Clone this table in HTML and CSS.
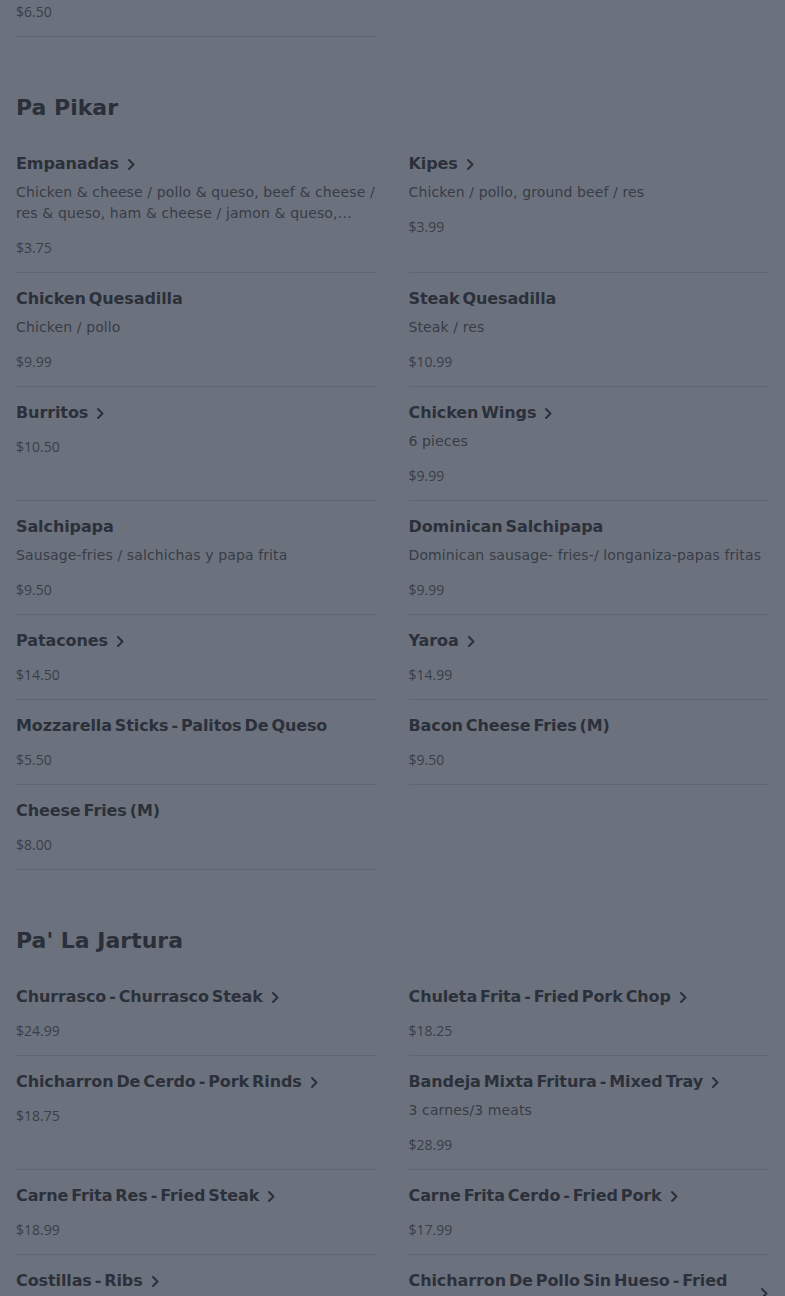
FILE: index.html
```html
<!DOCTYPE html>
<html lang="en">
<head>
	<meta charset="UTF-8">
	<title>Menu</title>
	<link rel="stylesheet" href="styles.css">
</head>
<body>
	<main class="menu">
		<section class="section section-tail">
			<div class="items">
				<div class="item">
					<div class="price">$6.50</div>
				</div>
			</div>
		</section>

		<section class="section">
			<h2>Pa Pikar</h2>
			<div class="items">
				<div class="item">
					<div class="name"><span>Empanadas</span><svg class="chev" viewBox="0 0 8 12"><path d="M2 1.5L6.5 6L2 10.5"/></svg></div>
					<p class="desc">Chicken &amp; cheese / pollo &amp; queso, beef &amp; cheese / res &amp; queso, ham &amp; cheese / jamon &amp; queso, pizza / pizza, shrimp / camarones</p>
					<div class="price">$3.75</div>
				</div>
				<div class="item">
					<div class="name"><span>Kipes</span><svg class="chev" viewBox="0 0 8 12"><path d="M2 1.5L6.5 6L2 10.5"/></svg></div>
					<p class="desc">Chicken / pollo, ground beef / res</p>
					<div class="price">$3.99</div>
				</div>
				<div class="item">
					<div class="name"><span>Chicken Quesadilla</span></div>
					<p class="desc">Chicken / pollo</p>
					<div class="price">$9.99</div>
				</div>
				<div class="item">
					<div class="name"><span>Steak Quesadilla</span></div>
					<p class="desc">Steak / res</p>
					<div class="price">$10.99</div>
				</div>
				<div class="item">
					<div class="name"><span>Burritos</span><svg class="chev" viewBox="0 0 8 12"><path d="M2 1.5L6.5 6L2 10.5"/></svg></div>
					<div class="price">$10.50</div>
				</div>
				<div class="item">
					<div class="name"><span>Chicken Wings</span><svg class="chev" viewBox="0 0 8 12"><path d="M2 1.5L6.5 6L2 10.5"/></svg></div>
					<p class="desc">6 pieces</p>
					<div class="price">$9.99</div>
				</div>
				<div class="item">
					<div class="name"><span>Salchipapa</span></div>
					<p class="desc">Sausage-fries / salchichas y papa frita</p>
					<div class="price">$9.50</div>
				</div>
				<div class="item">
					<div class="name"><span>Dominican Salchipapa</span></div>
					<p class="desc">Dominican sausage- fries-/ longaniza-papas fritas</p>
					<div class="price">$9.99</div>
				</div>
				<div class="item">
					<div class="name"><span>Patacones</span><svg class="chev" viewBox="0 0 8 12"><path d="M2 1.5L6.5 6L2 10.5"/></svg></div>
					<div class="price">$14.50</div>
				</div>
				<div class="item">
					<div class="name"><span>Yaroa</span><svg class="chev" viewBox="0 0 8 12"><path d="M2 1.5L6.5 6L2 10.5"/></svg></div>
					<div class="price">$14.99</div>
				</div>
				<div class="item">
					<div class="name"><span>Mozzarella Sticks - Palitos De Queso</span></div>
					<div class="price">$5.50</div>
				</div>
				<div class="item">
					<div class="name"><span>Bacon Cheese Fries (M)</span></div>
					<div class="price">$9.50</div>
				</div>
				<div class="item">
					<div class="name"><span>Cheese Fries (M)</span></div>
					<div class="price">$8.00</div>
				</div>
			</div>
		</section>

		<section class="section">
			<h2>Pa' La Jartura</h2>
			<div class="items">
				<div class="item">
					<div class="name"><span>Churrasco - Churrasco Steak</span><svg class="chev" viewBox="0 0 8 12"><path d="M2 1.5L6.5 6L2 10.5"/></svg></div>
					<div class="price">$24.99</div>
				</div>
				<div class="item">
					<div class="name"><span>Chuleta Frita - Fried Pork Chop</span><svg class="chev" viewBox="0 0 8 12"><path d="M2 1.5L6.5 6L2 10.5"/></svg></div>
					<div class="price">$18.25</div>
				</div>
				<div class="item">
					<div class="name"><span>Chicharron De Cerdo - Pork Rinds</span><svg class="chev" viewBox="0 0 8 12"><path d="M2 1.5L6.5 6L2 10.5"/></svg></div>
					<div class="price">$18.75</div>
				</div>
				<div class="item">
					<div class="name"><span>Bandeja Mixta Fritura - Mixed Tray</span><svg class="chev" viewBox="0 0 8 12"><path d="M2 1.5L6.5 6L2 10.5"/></svg></div>
					<p class="desc">3 carnes/3 meats</p>
					<div class="price">$28.99</div>
				</div>
				<div class="item">
					<div class="name"><span>Carne Frita Res - Fried Steak</span><svg class="chev" viewBox="0 0 8 12"><path d="M2 1.5L6.5 6L2 10.5"/></svg></div>
					<div class="price">$18.99</div>
				</div>
				<div class="item">
					<div class="name"><span>Carne Frita Cerdo - Fried Pork</span><svg class="chev" viewBox="0 0 8 12"><path d="M2 1.5L6.5 6L2 10.5"/></svg></div>
					<div class="price">$17.99</div>
				</div>
				<div class="item">
					<div class="name"><span>Costillas - Ribs</span><svg class="chev" viewBox="0 0 8 12"><path d="M2 1.5L6.5 6L2 10.5"/></svg></div>
					<div class="price">$19.99</div>
				</div>
				<div class="item">
					<div class="name"><span>Chicharron De Pollo Sin Hueso - Fried Chicken with Fries</span><svg class="chev" viewBox="0 0 8 12"><path d="M2 1.5L6.5 6L2 10.5"/></svg></div>
					<div class="price">$17.99</div>
				</div>
			</div>
		</section>
	</main>
</body>
</html>
```

FILE: styles.css
```css
body{
	margin: 0;
	background: #6c727d;
	font-family: "DejaVu Sans", "Open Sans", sans-serif;
	color: #2b303a;
}
.menu{
	padding: 0 17px 40px 16px;
}
.section{
	margin-top: 52px;
}
.section-tail{
	margin-top: -12px;
}
.section h2{
	margin: 0 0 11px;
	font-size: 22px;
	line-height: 38px;
	font-weight: 700;
	color: #2a2f39;
}
.items{
	display: grid;
	grid-template-columns: 1fr 1fr;
	column-gap: 33px;
}
.item{
	padding: 14px 0 14px;
	border-bottom: 1px solid #60656f;
}
.name{
	display: flex;
	align-items: center;
	gap: 8px;
	font-size: 16px;
	line-height: 24px;
	font-weight: 700;
	letter-spacing: -0.1px;
	word-spacing: -2.5px;
	color: #2b303a;
}
.chev{
	flex: none;
	width: 8px;
	height: 13px;
	fill: none;
	stroke: #2b303a;
	stroke-width: 2;
	stroke-linecap: round;
	stroke-linejoin: round;
}
.desc{
	margin: 6px 0 14px;
	font-size: 14px;
	line-height: 21px;
	letter-spacing: 0.12px;
	color: #373c46;
	display: -webkit-box;
	-webkit-line-clamp: 2;
	-webkit-box-orient: vertical;
	overflow: hidden;
}
.price{
	margin-top: 12px;
	font-family: "Open Sans", sans-serif;
	font-size: 14px;
	line-height: 20px;
	color: #393e48;
}
.section-tail .price{
	margin-top: 0;
}
```
